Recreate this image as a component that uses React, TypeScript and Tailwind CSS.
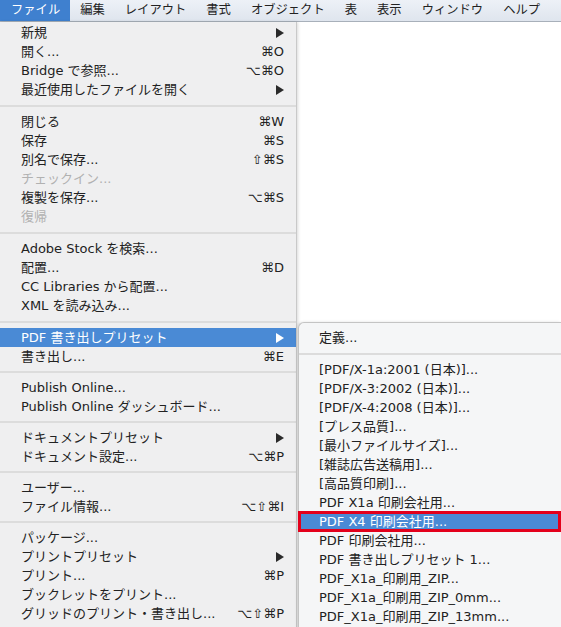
import React from "react";

type Item = { label: string; sc?: string; arrow?: boolean; disabled?: boolean; active?: boolean };

const groups: Item[][] = [
  [
    { label: "新規", arrow: true },
    { label: "開く...", sc: "⌘O" },
    { label: "Bridge で参照...", sc: "⌥⌘O" },
    { label: "最近使用したファイルを開く", arrow: true },
  ],
  [
    { label: "閉じる", sc: "⌘W" },
    { label: "保存", sc: "⌘S" },
    { label: "別名で保存...", sc: "⇧⌘S" },
    { label: "チェックイン...", disabled: true },
    { label: "複製を保存...", sc: "⌥⌘S" },
    { label: "復帰", disabled: true },
  ],
  [
    { label: "Adobe Stock を検索..." },
    { label: "配置...", sc: "⌘D" },
    { label: "CC Libraries から配置..." },
    { label: "XML を読み込み..." },
  ],
  [
    { label: "PDF 書き出しプリセット", arrow: true, active: true },
    { label: "書き出し...", sc: "⌘E" },
  ],
  [{ label: "Publish Online..." }, { label: "Publish Online ダッシュボード..." }],
  [
    { label: "ドキュメントプリセット", arrow: true },
    { label: "ドキュメント設定...", sc: "⌥⌘P" },
  ],
  [{ label: "ユーザー..." }, { label: "ファイル情報...", sc: "⌥⇧⌘I" }],
  [
    { label: "パッケージ..." },
    { label: "プリントプリセット", arrow: true },
    { label: "プリント...", sc: "⌘P" },
    { label: "ブックレットをプリント..." },
    { label: "グリッドのプリント・書き出し...", sc: "⌥⇧⌘P" },
  ],
];

const sepHeights = ["h-[13px]", "h-[13px]", "h-[13px]", "h-[12px]", "h-[12px]", "h-[12px]", "h-[12px]"];

const subItems = [
  "[PDF/X-1a:2001 (日本)]...",
  "[PDF/X-3:2002 (日本)]...",
  "[PDF/X-4:2008 (日本)]...",
  "[プレス品質]...",
  "[最小ファイルサイズ]...",
  "[雑誌広告送稿用]...",
  "[高品質印刷]...",
  "PDF X1a 印刷会社用...",
  "PDF X4 印刷会社用...",
  "PDF 印刷会社用...",
  "PDF 書き出しプリセット 1...",
  "PDF_X1a_印刷用_ZIP...",
  "PDF_X1a_印刷用_ZIP_0mm...",
  "PDF_X1a_印刷用_ZIP_13mm...",
];

function Arrow({ white }: { white?: boolean }) {
  return (
    <svg width="8" height="10" viewBox="0 0 8 10" className="block">
      <path d="M0 0 L8 5 L0 10 Z" fill={white ? "#ffffff" : "#2a2a2a"} />
    </svg>
  );
}

function Row({ item }: { item: Item }) {
  const color = item.active ? "text-white bg-[#4a8ad5]" : item.disabled ? "text-[#b1b1b1]" : "text-[#222222]";
  return (
    <div className={`flex h-[19px] items-center justify-between pl-[21px] pr-[12px] leading-[19px] ${color}`}>
      <span className="whitespace-nowrap">{item.label}</span>
      {item.sc && <span className="whitespace-nowrap">{item.sc}</span>}
      {item.arrow && <Arrow white={item.active} />}
    </div>
  );
}

function Sep({ h }: { h: string }) {
  return (
    <div className={`flex ${h} items-center`}>
      <div className="h-[2px] w-full bg-[#dcdcdc]" />
    </div>
  );
}

export default function App() {
  const bar = ["編集", "レイアウト", "書式", "オブジェクト", "表", "表示", "ウィンドウ", "ヘルプ"];
  return (
    <div
      className="relative flex h-[627px] w-[561px] flex-col overflow-hidden bg-white text-[13px] text-[#222222]"
      style={{ fontFamily: '"DejaVu Sans", "Noto Sans CJK JP", sans-serif' }}
    >
      {/* menu bar */}
      <div className="flex h-[22px] shrink-0 items-stretch border-b border-[#a8b0ba] bg-gradient-to-b from-[#edf1f7] to-[#dfe5ee] text-[12.3px]">
        <div className="flex items-center bg-[#3f80cf] pl-[11px] pr-[10px] text-white">ファイル</div>
        {bar.map((b) => (
          <div key={b} className="flex items-center px-[10px] text-[#222222]">
            {b}
          </div>
        ))}
      </div>

      <div className="flex flex-1 items-start">
        {/* main menu */}
        <div className="h-full w-[297px] shrink-0 border-r border-[#c9c9c9] bg-[#efeff0] pt-[1px] shadow-[1px_0_3px_rgba(0,0,0,0.15)]">
          {groups.map((g, gi) => (
            <React.Fragment key={gi}>
              {g.map((it) => (
                <Row key={it.label} item={it} />
              ))}
              {gi < groups.length - 1 && <Sep h={sepHeights[gi]} />}
            </React.Fragment>
          ))}
        </div>

        {/* submenu */}
        <div className="ml-[1px] mt-[300px] h-[320px] flex-1 rounded-tl-[6px] border-l border-t border-[#c4c4c4] bg-[#f5f6f7] pt-[5px] shadow-[-1px_0_3px_rgba(0,0,0,0.12)]">
          <div className="flex h-[19px] items-center pl-[20px] leading-[19px]">定義...</div>
          <Sep h="h-[13px]" />
          {subItems.map((s) => {
            const hl = s === "PDF X4 印刷会社用...";
            return (
              <div
                key={s}
                className={`relative flex h-[19px] items-center pl-[20px] leading-[19px] ${hl ? "bg-[#4a8ad5] text-white" : ""}`}
              >
                <span className="whitespace-nowrap">{s}</span>
                {hl && (
                  <div className="absolute -bottom-[1px] -left-[1px] -top-[1px] right-0 border-[3px] border-[#e3001b]" />
                )}
              </div>
            );
          })}
        </div>
      </div>
    </div>
  );
}
